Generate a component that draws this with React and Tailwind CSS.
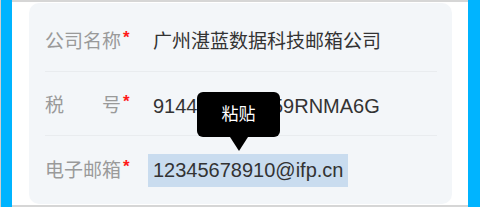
import React from "react";

const font = { fontFamily: '"Liberation Sans", "Noto Sans CJK SC", sans-serif' };

const rows = [
  { label: ["公司名称"], value: "广州湛蓝数据科技邮箱公司" },
  { label: ["税", "号"], value: "91440101MA59RNMA6G", latin: true },
  { label: ["电子邮箱"], value: "12345678910@ifp.cn", latin: true, selected: true },
];

const Row = ({ row, last }) => (
  <div className={`flex items-center h-[64px] pt-[4px] ${last ? "" : "border-b border-[#e9ecef]"}`}>
    <div className="flex w-[108px] shrink-0">
      <div className="flex justify-between w-[76px] text-[#9a9a9a]">
        {row.label.map((t) => (
          <span key={t}>{t}</span>
        ))}
      </div>
      <span className="text-[#ff1a1a] text-[17px] font-bold leading-none self-start -mt-[3px] ml-[2px]">*</span>
    </div>
    {row.selected ? (
      <span className="bg-[#c9dcef] text-[#333] text-[20px] px-[5px] -ml-[5px] leading-[33px]">{row.value}</span>
    ) : (
      <span className={`text-[#333] ${row.latin ? "text-[20px]" : ""}`}>{row.value}</span>
    )}
  </div>
);

export default function App() {
  return (
    <div className="flex w-[480px] h-[207px] bg-white overflow-hidden" style={font}>
      <div className="w-px bg-[#cfcfcf]" />
      <div className="w-[11px] bg-[#00b4ff]" />
      <div className="flex-1 flex flex-col border-t-2 border-b-2 border-[#d6d6d6] pl-[17px] pr-[16px]">
        <div className="relative mt-[1px] flex-1 bg-[#f3f6f9] rounded-[10px] pt-[5px] pl-[16px] pr-[15px] text-[19px] leading-none mb-[1px]">
          {rows.map((r, i) => (
            <Row key={i} row={r} last={i === rows.length - 1} />
          ))}
          <div className="absolute left-[168px] top-[89px] flex flex-col items-center">
            <div className="w-[83px] h-[45px] rounded-[6px] bg-black text-white text-[17px] flex items-center justify-center">
              粘贴
            </div>
            <div className="w-0 h-0 border-l-[9px] border-r-[9px] border-t-[14px] border-l-transparent border-r-transparent border-t-black" />
          </div>
        </div>
      </div>
      <div className="w-[12px] bg-[#00b4ff]" />
    </div>
  );
}
